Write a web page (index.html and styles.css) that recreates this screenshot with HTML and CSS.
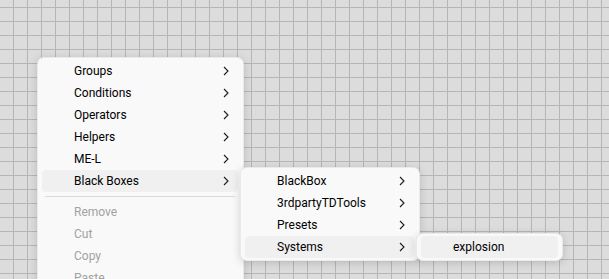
FILE: index.html
```html
<!DOCTYPE html>
<html lang="en">
<head>
    <meta charset="UTF-8">
    <meta name="viewport" content="width=device-width, initial-scale=1.0">
    <title>Context menu</title>
    <link rel="stylesheet" href="styles.css">
</head>
<body>
    <div class="canvas">
        <div class="menu menu-main">
            <div class="item">Groups<svg class="chev" viewBox="0 0 6 10"><polyline points="1,1 5,5 1,9"/></svg></div>
            <div class="item">Conditions<svg class="chev" viewBox="0 0 6 10"><polyline points="1,1 5,5 1,9"/></svg></div>
            <div class="item">Operators<svg class="chev" viewBox="0 0 6 10"><polyline points="1,1 5,5 1,9"/></svg></div>
            <div class="item">Helpers<svg class="chev" viewBox="0 0 6 10"><polyline points="1,1 5,5 1,9"/></svg></div>
            <div class="item">ME-L<svg class="chev" viewBox="0 0 6 10"><polyline points="1,1 5,5 1,9"/></svg></div>
            <div class="item active">Black Boxes<svg class="chev" viewBox="0 0 6 10"><polyline points="1,1 5,5 1,9"/></svg></div>
            <div class="sep"></div>
            <div class="item disabled">Remove</div>
            <div class="item disabled">Cut</div>
            <div class="item disabled">Copy</div>
            <div class="item disabled">Paste</div>
        </div>

        <div class="menu menu-sub">
            <div class="item">BlackBox<svg class="chev" viewBox="0 0 6 10"><polyline points="1,1 5,5 1,9"/></svg></div>
            <div class="item">3rdpartyTDTools<svg class="chev" viewBox="0 0 6 10"><polyline points="1,1 5,5 1,9"/></svg></div>
            <div class="item">Presets<svg class="chev" viewBox="0 0 6 10"><polyline points="1,1 5,5 1,9"/></svg></div>
            <div class="item active">Systems<svg class="chev" viewBox="0 0 6 10"><polyline points="1,1 5,5 1,9"/></svg></div>
        </div>

        <div class="menu menu-leaf">
            <div class="item active">explosion</div>
        </div>
    </div>
</body>
</html>
```

FILE: styles.css
```css
html, body {
    margin: 0;
    padding: 0;
    height: 100%;
    overflow: hidden;
}
body {
    font-family: Roboto, "Liberation Sans", sans-serif;
    font-size: 12px;
    color: #000;
}
.canvas {
    position: relative;
    width: 100%;
    height: 100%;
    background-color: #dcdcdc;
    background-image:
        linear-gradient(to right, transparent 13px, #b5b5b5 13px, #b5b5b5 14px),
        linear-gradient(to bottom, transparent 7px, #b5b5b5 7px, #b5b5b5 8px, transparent 8px);
    background-size: 14px 14px;
}
.menu {
    position: absolute;
    box-sizing: border-box;
    background: #f9f9f9;
    border: 1px solid rgba(0,0,0,0.06);
    border-radius: 7px;
    box-shadow: 0 2px 8px rgba(0,0,0,0.16);
    padding: 2px 5px 2px 4px;
}
.menu-main {
    left: 37px;
    top: 57px;
    width: 207px;
}
.menu-sub {
    left: 240px;
    top: 167px;
    width: 180px;
}
.menu-leaf {
    left: 416px;
    top: 233px;
    width: 147px;
    padding: 2px 4px;
}
.item {
    display: flex;
    align-items: center;
    justify-content: space-between;
    height: 22px;
    padding: 0 9px 0 32px;
    border-radius: 4px;
    white-space: nowrap;
}
.item.active {
    background: #f0f0f0;
}
.item.disabled {
    color: #a2a2a2;
}
.chev {
    width: 6px;
    height: 10px;
    fill: none;
    stroke: #1c1c1c;
    stroke-width: 1.1;
}
.sep {
    height: 1px;
    margin: 4px 3px 4px 3px;
    background: #dadada;
}
```
